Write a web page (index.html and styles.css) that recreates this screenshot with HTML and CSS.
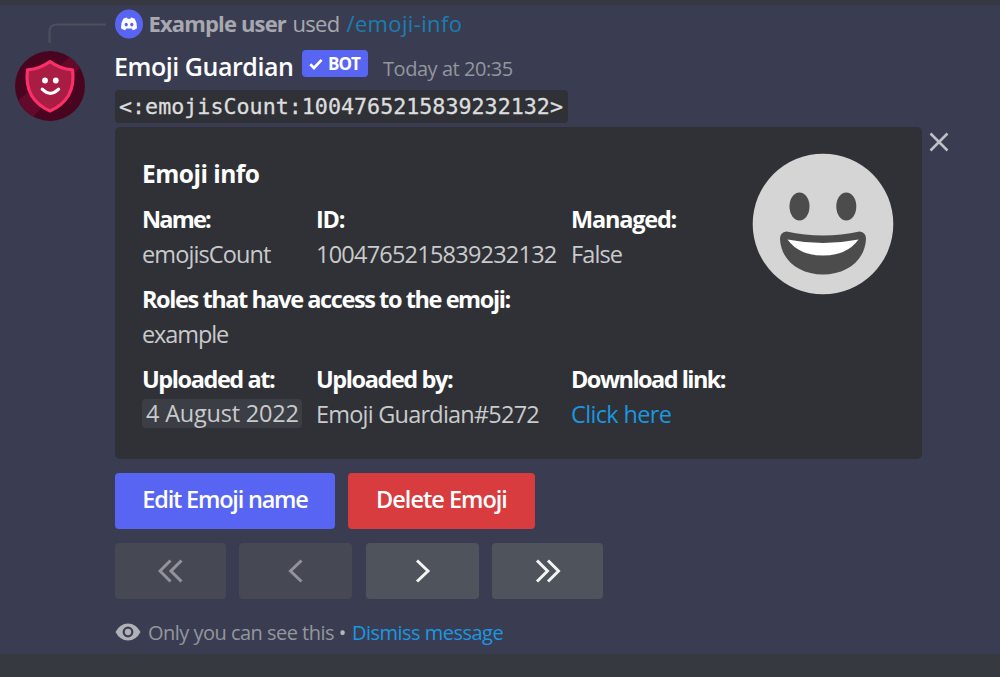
FILE: index.html
```html
<!DOCTYPE html>
<html lang="en">
<head>
<meta charset="utf-8">
<title>Emoji Guardian</title>
<link rel="stylesheet" href="styles.css">
</head>
<body>
<main class="message">
  <div class="gutter">
    <svg class="spine" width="60" height="24" viewBox="0 0 60 24"><path d="M2.500 23V12Q2.500 4.500 10 4.500H59" fill="none" stroke="#4c4f5d" stroke-width="2.200"/></svg>
    <svg class="avatar" width="70" height="70" viewBox="0 0 70 70">
      <defs><clipPath id="disc"><circle cx="35" cy="35" r="35"/></clipPath></defs>
      <g clip-path="url(#disc)">
        <rect width="70" height="70" fill="#49051f"/>
        <path d="M0 52L62 0L70 12L14 70H0Z" fill="#620a2c"/>
      </g>
      <path d="M35 10.500Q45 18 57.500 18.800Q59.500 34 53.500 44.500Q47.500 54.500 35 60Q22.500 54.500 16.500 44.500Q10.500 34 12.500 18.800Q25 18 35 10.500Z" fill="#a91c44" stroke="#fb3068" stroke-width="3.200" stroke-linejoin="round"/>
      <circle cx="30" cy="29.500" r="2.900" fill="#fff"/><circle cx="40.800" cy="29.500" r="2.900" fill="#fff"/>
      <path d="M27.200 38.200Q35.400 46.500 43.600 38.200" fill="none" stroke="#fff" stroke-width="3.200" stroke-linecap="round"/>
    </svg>
  </div>
  <div class="body">
    <div class="reply">
      <svg class="discord" width="28" height="30" viewBox="0 0 28 30"><ellipse cx="14" cy="15" rx="14" ry="14.500" fill="#5865f2"/><path d="M8.300 9.800Q10 8.800 12 8.600L12.600 9.700H15.400L16 8.600Q18 8.800 19.700 9.800Q22.300 14 22 19.200Q20 20.900 17.800 21.200L16.800 19.500H11.200L10.200 21.200Q8 20.900 6 19.200Q5.700 14 8.300 9.800Z" fill="#fff"/><ellipse cx="11.200" cy="15.600" rx="1.600" ry="1.900" fill="#5865f2"/><ellipse cx="16.800" cy="15.600" rx="1.600" ry="1.900" fill="#5865f2"/></svg>
      <b class="user">Example user</b><span class="used">used</span><span class="command">/emoji-info</span>
    </div>
    <div class="header">
      <span class="name">Emoji Guardian</span>
      <span class="tag"><svg width="14" height="12" viewBox="0 0 14 12"><path d="M1.300 6.300L5 10L12.600 1.800" fill="none" stroke="#fff" stroke-width="2.700"/></svg><span class="bot">BOT</span></span>
      <span class="time">Today at 20:35</span>
    </div>
    <code class="code">&lt;:emojisCount:1004765215839232132&gt;</code>
    <div class="embed-row">
      <section class="embed">
        <div class="info">
          <h1 class="title">Emoji info</h1>
          <div class="fields">
            <div><b class="label name-label">Name:</b><span class="value">emojisCount</span></div>
            <div><b class="label loose">ID:</b><span class="value number">1004765215839232132</span></div>
            <div><b class="label loose">Managed:</b><span class="value">False</span></div>
            <div class="wide"><b class="label">Roles that have access to the emoji:</b><span class="value example">example</span></div>
            <div><b class="label">Uploaded at:</b><span class="value"><span class="date">4 August 2022</span></span></div>
            <div><b class="label">Uploaded by:</b><span class="value number">Emoji Guardian#5272</span></div>
            <div><b class="label tight">Download link:</b><a class="value link">Click here</a></div>
          </div>
        </div>
        <svg class="emoji" width="142" height="142" viewBox="0 0 142 142"><circle cx="71" cy="71" r="70.300" fill="#d5d5d5"/><ellipse cx="47.500" cy="53.500" rx="10" ry="14" fill="#4c4c4c"/><ellipse cx="94.300" cy="53.500" rx="10" ry="14" fill="#4c4c4c"/><path d="M34.500 78.500Q71 86.500 107.500 78.500Q114 79 114 86C113 108 94 121.500 71 121.500S29 108 28 86Q28 79 34.500 78.500Z" fill="#4c4c4c"/><path d="M35.500 86.500Q71 93.500 106.500 86.500Q95 102.500 71 102.500T35.500 86.500Z" fill="#fff"/></svg>
      </section>
      <svg class="close" width="20" height="20" viewBox="0 0 20 20"><path d="M1.500 1.500L18.500 18.500M18.500 1.500L1.500 18.500" stroke="#c0c1c6" stroke-width="2.500"/></svg>
    </div>
    <div class="actions">
      <button class="btn edit">Edit Emoji name</button>
      <button class="btn delete">Delete Emoji</button>
    </div>
    <div class="actions">
      <button class="btn off"><svg width="26" height="24" viewBox="0 0 26 24"><path d="M12.500 1.500L2 12L12.500 22.500M23.500 1.500L13 12L23.500 22.500"/></svg></button>
      <button class="btn off mid"><svg width="26" height="24" viewBox="0 0 26 24"><path d="M18.500 1.500L7.500 12L18.500 22.500"/></svg></button>
      <button class="btn on mid next"><svg width="26" height="24" viewBox="0 0 26 24"><path d="M7 1.500L18 12L7 22.500"/></svg></button>
      <button class="btn on"><svg width="26" height="24" viewBox="0 0 26 24"><path d="M2 1.500L12.500 12L2 22.500M13 1.500L23.500 12L13 22.500"/></svg></button>
    </div>
    <footer class="note">
      <svg width="26" height="18" viewBox="0 0 26 18"><path d="M.5 9Q5 .5 13 .5T25.500 9Q21 17.500 13 17.500T.5 9Z" fill="#b0b2b8"/><circle cx="13" cy="9" r="4.300" fill="none" stroke="#3b3d50" stroke-width="2.300"/></svg>
      <span class="only">Only you can see this <span class="dot">•</span></span><a class="dismiss">Dismiss message</a>
    </footer>
  </div>
</main>
</body>
</html>
```
FILE: styles.css
```css
* { box-sizing: border-box; }
body { margin: 0; height: 677px; padding: 5px 0 23px; background: #36393f; font-family: "Open Sans", sans-serif; overflow: hidden; }
svg { display: block; flex: none; }
span, b, a, code { white-space: nowrap; }
.message { height: 649px; display: flex; background: #3a3d51; }
.gutter { width: 115px; flex: none; padding: 15px 0 0 15px; }
.spine { margin-left: 32px; }
.avatar { margin-top: 6.500px; }
.body { display: flex; flex-direction: column; align-items: flex-start; }
.reply { height: 38px; display: flex; align-items: center; padding-bottom: 3px; font-size: 22px; font-weight: 500; color: #a7a8b0; }
.discord { margin: 2px 0 0 -.500px; }
.user { width: 144px; margin-left: 6px; font-weight: 700; letter-spacing: -.850px; }
.used { width: 54px; letter-spacing: -.700px; }
.command { color: #1a7eb0; letter-spacing: .350px; }
.header { height: 47px; display: flex; align-items: center; padding-bottom: 1px; }
.name { width: 188px; margin-left: -1px; color: #fff; font-size: 25px; font-weight: 600; letter-spacing: -.450px; }
.tag { width: 66px; height: 27px; margin-top: -5px; display: flex; align-items: center; gap: 5px; padding-left: 7px; background: #5865f2; border-radius: 4px; color: #fff; }
.bot { font-size: 17px; font-weight: 700; letter-spacing: -1px; }
.time { margin: 4px 0 0 15px; font-size: 20px; font-weight: 500; color: #94969e; letter-spacing: -.450px; }
.code { width: 453px; height: 33px; padding-left: 4px; border-radius: 4px; background: #2f3136; color: #dcddde; font: 21.700px/33px "DejaVu Sans Mono", monospace; -webkit-text-stroke: .3px #dcddde; }
.embed-row { display: flex; gap: 7px; margin-top: 4px; }
.embed { width: 807px; height: 332px; display: flex; border-radius: 5px; background: #2f3136; padding: 31px 28px 0 27px; }
.info { width: 610px; }
.title { margin: 0 0 12px; height: 32px; font-size: 24.500px; line-height: 32px; font-weight: 700; color: #fff; letter-spacing: -.500px; }
.fields { display: grid; grid-template-columns: 174px 255px 180px; row-gap: 10px; }
.wide { grid-column: 1 / -1; }
.label, .value { display: block; height: 35px; line-height: 34px; font-size: 23.500px; }
.label { color: #fff; font-weight: 700; letter-spacing: -1.420px; }
.loose { letter-spacing: -1.200px; }
.tight { letter-spacing: -1.530px; }
.name-label { letter-spacing: -1.800px; }
.value { color: #c9cacc; letter-spacing: -.9px; }
.number { letter-spacing: -.780px; }
.example { letter-spacing: -1.100px; }
.date { display: block; width: 160px; height: 29px; margin-top: 2px; padding-left: 4px; line-height: 29px; border-radius: 4px; background: #3b3e44; letter-spacing: -.200px; }
.link { color: #1a97e0; letter-spacing: -.650px; }
.emoji { margin-top: -5px; }
.close { margin-top: 5px; }
.actions { display: flex; gap: 13px; margin-top: 14px; }
.btn { height: 56px; border: 0; border-radius: 4px; padding: 0 0 4px; display: flex; align-items: center; justify-content: center; font: 600 23.500px "Open Sans", sans-serif; letter-spacing: -1.200px; color: #fff; white-space: nowrap; }
.edit { width: 220px; background: #5865f2; }
.delete { width: 187px; background: #d83c3e; letter-spacing: -1px; }
.off, .on { width: 111px; padding: 0; }
.mid { width: 113px; }
.next { margin-left: 1px; }
.off { background: #464854; }
.on { background: #4f545c; }
.btn path { fill: none; stroke-width: 3; stroke: #f4f4f5; }
.off path { stroke: #92939c; }
.note { height: 30px; margin: 18px 0 0; display: flex; align-items: center; font-size: 20px; font-weight: 500; color: #94969e; }
.only { width: 204px; margin-left: 7px; letter-spacing: -.520px; }
.dot { color: #b5b7bc; }
.dismiss { color: #1a97e0; letter-spacing: -.520px; }
```
